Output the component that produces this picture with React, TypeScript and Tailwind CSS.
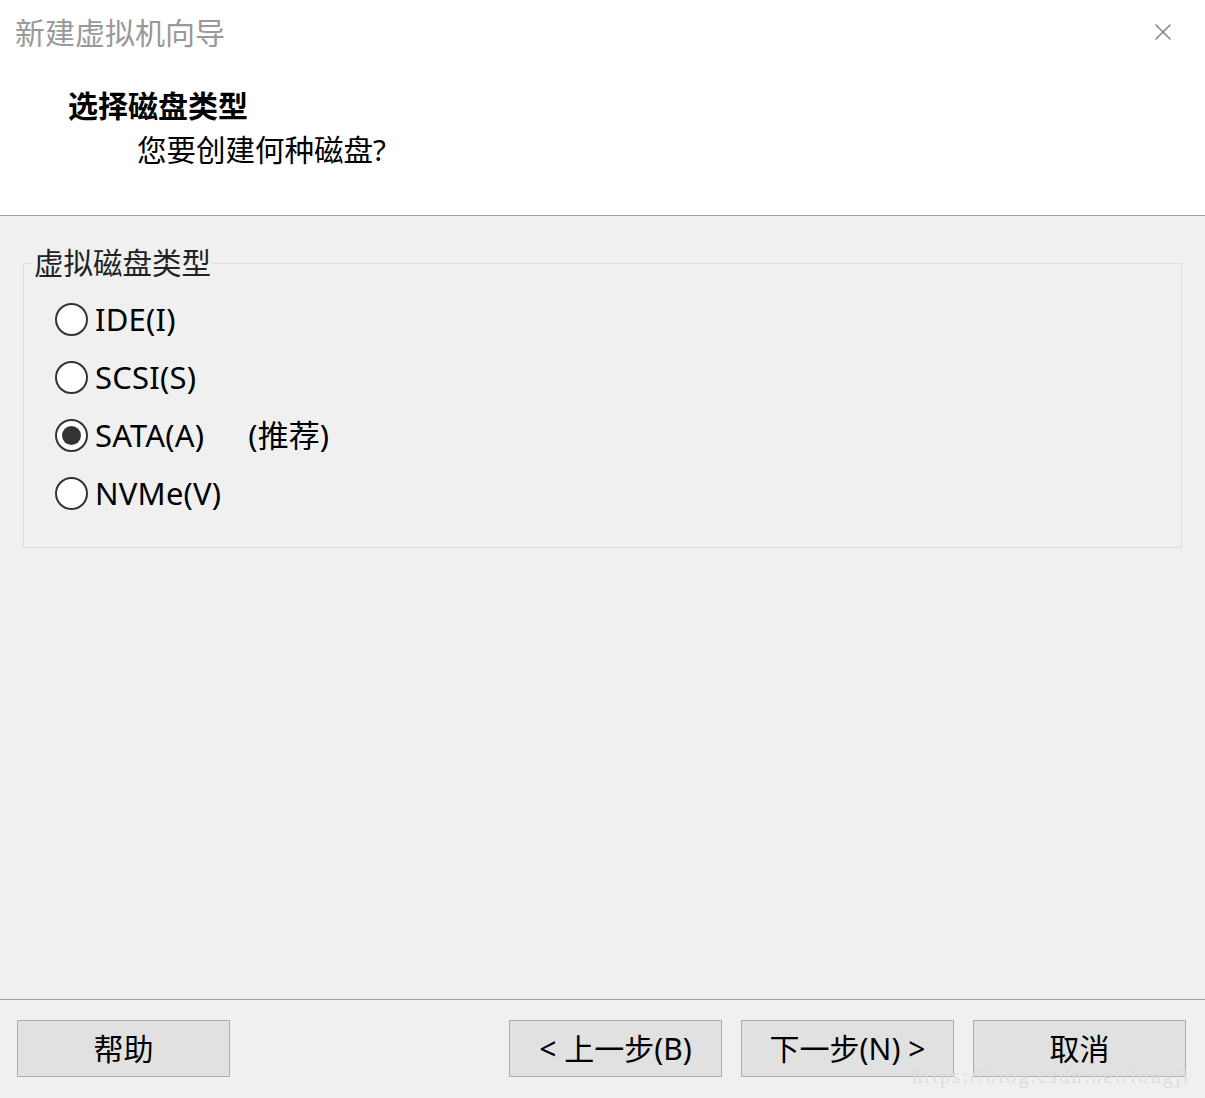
import { X } from "lucide-react";

const SANS = "font-['Noto_Sans','Noto_Sans_CJK_SC',sans-serif]";

const OPTIONS = [
  { id: "ide", label: "IDE(I)", checked: false },
  { id: "scsi", label: "SCSI(S)", checked: false },
  { id: "sata", label: "SATA(A)", checked: true, note: "(推荐)" },
  { id: "nvme", label: "NVMe(V)", checked: false },
];

function Radio({ checked }: { checked: boolean }) {
  return (
    <span className="flex h-[33px] w-[33px] items-center justify-center rounded-full border-[2px] border-[#333] bg-white">
      {checked ? <span className="h-[19px] w-[19px] rounded-full bg-[#333]" /> : null}
    </span>
  );
}

function Btn({ children }: { children: React.ReactNode }) {
  return (
    <button
      type="button"
      className="flex h-[57px] w-[213px] items-center justify-center border border-[#adadad] bg-[#e1e1e1] text-[30px] text-black"
    >
      {children}
    </button>
  );
}

export default function App() {
  return (
    <div className={`flex h-[1098px] w-[1205px] flex-col bg-[#f0f0f0] ${SANS}`}>
      <header className="h-[216px] border-b border-[#a0a0a0] bg-white">
        <div className="flex items-start justify-between pl-[15px] pr-[28px] pt-[11px]">
          <span className="text-[30px] leading-[44px] text-[#999]">新建虚拟机向导</span>
          <X className="mt-[7px] h-[28px] w-[28px] text-[#888]" strokeWidth={1.4} />
        </div>
        <h1 className="mt-[32px] pl-[68px] text-[30px] font-bold leading-[38px] text-black">
          选择磁盘类型
        </h1>
        <p className="mt-[6px] pl-[137px] text-[29.5px] leading-[38px] text-black">
          您要创建何种磁盘?
        </p>
      </header>

      <main className="flex-1 px-[23px] pt-[29px]">
        <fieldset className="h-[303px] w-[1159px] border border-[#dcdcdc] px-[31px] pb-[24px]">
          <legend className="ml-[-22px] px-[1px] text-[29.5px] leading-[36px] text-[#222]">
            虚拟磁盘类型
          </legend>
          <div className="flex flex-col gap-[25px] pt-[22px]">
            {OPTIONS.map((o) => (
              <div key={o.id} className="flex h-[33px] items-center">
                <Radio checked={o.checked} />
                <span className="ml-[7px] text-[31px] leading-[33px] tracking-[0.2px] text-black">
                  {o.label}
                </span>
                {o.note ? (
                  <span className="ml-[44px] text-[31px] leading-[33px] text-black">{o.note}</span>
                ) : null}
              </div>
            ))}
          </div>
        </fieldset>
      </main>

      <footer className="relative h-[99px] border-t border-[#a0a0a0] px-[17px] pt-[20px]">
        <div className="flex items-start">
          <Btn>帮助</Btn>
          <div className="ml-auto flex gap-[19px] pr-[2px]">
            <Btn>&lt; 上一步(B)</Btn>
            <Btn>下一步(N) &gt;</Btn>
            <Btn>取消</Btn>
          </div>
        </div>
        <span className="absolute left-[912px] top-[61px] font-['Liberation_Serif',serif] text-[20px] tracking-[2.3px] text-[#dcdcdc]">
          https://blog.csdn.net/longji
        </span>
      </footer>
    </div>
  );
}
